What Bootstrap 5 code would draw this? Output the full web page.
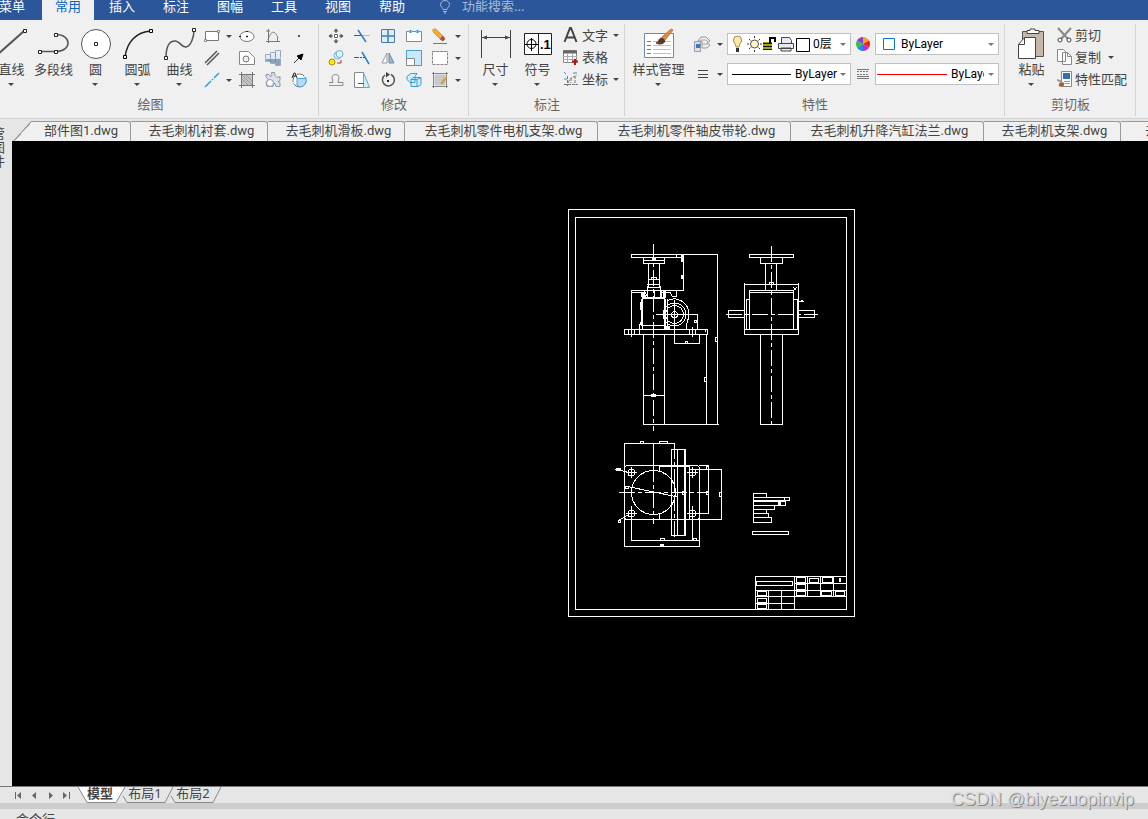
<!DOCTYPE html>
<html lang="zh-CN">
<head>
<meta charset="utf-8">
<meta name="viewport" content="width=device-width, initial-scale=1">
<title>CAD</title>
<link href="https://cdn.jsdelivr.net/npm/bootstrap@5.3.0/dist/css/bootstrap.min.css" rel="stylesheet">
<style>
:root{--chrome:#f0f0f0;--strip:#e6e6e6;--ink:#444;--line:#d4d4d4}
body{font:13px/18px "Noto Sans","Noto Sans CJK SC",sans-serif;color:var(--ink);background:var(--strip)}
svg{display:block;flex:none;fill:none;stroke:#555;stroke-width:1}
button{border:0;background:none;padding:0;color:inherit;font:inherit}
.menu-bar{background:#2b579a;height:20px}
.menu-tabs{margin-left:-12px}
.menu-tab{width:52px;margin:0 1px;height:20px;line-height:12px;color:#fff;text-align:center;text-decoration:none;white-space:nowrap}
.menu-tab:first-child{margin-left:-2px;margin-right:3px}
.menu-tab.active{background:var(--chrome);color:#0a64c8}
.search-box{border:0;background:none;color:#aab9d5;padding:0;width:120px;height:12px;line-height:12px;margin-left:11px;outline:0}
.search-box::placeholder{color:#aab9d5;opacity:1}
.bulb{margin-left:20px;stroke:#aab9d5}
.ribbon{background:var(--chrome);border-bottom:1px solid var(--line);height:99px;overflow:hidden;padding-top:4px}
.panel{border-right:1px solid var(--line);height:92px;white-space:nowrap}
.panel-draw{width:319px}
.panel-modify{width:150px}
.panel-note{width:156px}
.panel-props{width:380px}
.panel-clip{width:131px}
.panel-title{color:#666;text-align:center;line-height:16px;padding-left:1px}
.panel-draw .panel-title{padding-right:18px}
.panel-body{height:72px;padding-left:5px}
.panel-draw .panel-body{margin-left:-10px;padding-left:0}
.big{width:42px;display:flex;flex-direction:column;align-items:center}
.big span{line-height:16px;white-space:nowrap;margin-top:-1px;padding-left:1px}
.big-wide{width:56px}
.caret{width:0;height:0;border:3px solid transparent;border-top-color:#444;border-bottom:0;flex:none;margin:auto}
.big .caret{margin:6px auto 0}
.icons{display:grid;grid-auto-rows:22px;height:67px;padding-top:1px}
.icons>*{display:grid;place-items:center}
.draw-icons{grid-template-columns:24px 10px 26px 26px 26px}
.modify-icons{grid-template-columns:repeat(5,26px) 10px}
.text-rows{display:grid;grid-auto-rows:22px;margin-left:5px}
.text-rows .cmd{display:flex;align-items:center;gap:4px;line-height:18px}
.text-rows .caret{margin:0 0 0 1px}
.panel-clip .cmd{gap:3px}
.prop-row{height:22px;display:flex;align-items:center}
.prop-rows{display:flex;flex-direction:column;gap:8px;padding:9px 0 0 4px}
.drop{width:12px;margin-right:1px;display:grid}
.combo{display:flex;align-items:center;width:124px;height:22px;background:#fff;border:1px solid #c0c0c0;padding:0 4px;color:#000;overflow:hidden}
.combo select{appearance:none;border:0;background:none;padding:0;color:#000;font:12px/18px Roboto,"Noto Sans CJK SC",sans-serif;flex:1 1 0;min-width:0;outline:0}
.combo .caret{border-top-color:#777;margin:0}
.tool{width:24px;display:grid;place-items:center}
.docs{height:22px;padding-left:1px;overflow:hidden;padding-top:2px}
.doc-tab{flex:none;width:137px;height:20px;background:var(--chrome);border:1px solid #999;border-width:1px 1px 0 0;font-family:Roboto,"Noto Sans CJK SC",sans-serif;line-height:17px;text-align:center;padding-left:5px;white-space:nowrap;border-radius:0 3px 0 0}
.doc-wide{width:193px}
.doc-first{width:118px;clip-path:polygon(18px 0,100% 0,100% 100%,0 100%);padding-left:19px;background:linear-gradient(132deg,#999 14px,var(--chrome) 14px)}
.side-strip{width:12px;overflow:hidden;padding-top:7px}
.side-strip span{display:block;line-height:14px;margin-left:-8px;white-space:nowrap}
.work,.work-main{min-height:0;min-width:0}
.drawing{background:#000;overflow:hidden;padding:68px 0 0 556px}
.sheet{stroke:#fff;shape-rendering:crispEdges}
.sheet .solid{fill:#fff}
.layouts{height:17px;padding-left:12px;border-top:1px solid #777;background:var(--strip)}
.nav-arrows{fill:#666;stroke:none}
.lay-tab{height:16px;line-height:12px;text-decoration:none;color:var(--ink);display:grid;justify-items:center}
.lay-tab svg,.lay-tab span{grid-area:1/1}
.lay-tab span{padding-right:4px}
.lay-tab+.lay-tab{margin-left:-6px}
.splitter{height:6px;background:#ccc}
.command{height:10px;padding-left:16px;line-height:20px;overflow:hidden}
.watermark{position:absolute;right:14px;bottom:9px;font:18px/22px "Liberation Sans",sans-serif;color:#d8d8d8;text-shadow:1px 1px 0 #888}
</style>
</head>
<body class="vh-100 d-flex flex-column overflow-hidden position-relative">

<header class="menu-bar d-flex overflow-hidden flex-shrink-0">
  <nav class="menu-tabs d-flex">
    <a class="menu-tab" href="#">菜单</a><a class="menu-tab active" href="#">常用</a><a class="menu-tab" href="#">插入</a><a class="menu-tab" href="#">标注</a><a class="menu-tab" href="#">图幅</a><a class="menu-tab" href="#">工具</a><a class="menu-tab" href="#">视图</a><a class="menu-tab" href="#">帮助</a>
  </nav>
  <svg class="bulb" width="12" height="14"><path d="M4 9.500C4 7.500 1.500 7 1.500 4.500a4.500 4 0 0 1 9 0C10.500 7 8 7.500 8 9.500zM4 11.500h4M5 13h2"/></svg>
  <input class="search-box" type="text" placeholder="功能搜索..." aria-label="功能搜索">
</header>

<div class="ribbon d-flex flex-shrink-0">
  <section class="panel panel-draw">
    <div class="panel-body d-flex">
      <button class="big"><svg width="42" height="38"><path d="M6 32 34 7" stroke-width="2"/><path d="M33.500 5.500h3v3h-3z" fill="#fff" stroke="#222"/></svg><span>直线</span><i class="caret"></i></button>
      <button class="big"><svg width="42" height="38"><path d="M8 27.500h16c16 0 16-17 0-17" stroke-width="1.500"/><path d="M6.500 26.500h3v3h-3zM22.500 26.500h3v3h-3zM22.500 9.500h3v3h-3z" fill="#fff" stroke="#222"/></svg><span>多段线</span></button>
      <button class="big"><svg width="42" height="38"><circle cx="22" cy="20" r="14.500" fill="#fff"/><path d="M20.500 18.500h3v3h-3z" fill="#fff" stroke="#222"/></svg><span>圆</span><i class="caret"></i></button>
      <button class="big"><svg width="42" height="38"><path d="M9 33C11 18 20 8 35 7" stroke="#222" stroke-width="1.500"/><path d="M7.500 31.500h3v3h-3zM33.500 5.500h3v3h-3z" fill="#fff" stroke="#000"/></svg><span>圆弧</span><i class="caret"></i></button>
      <button class="big"><svg width="42" height="38"><path d="M8 34C8 22 12 17 17 17c5 0 7 7 11 6 5-1 8-10 8-17" stroke-width="1.500"/><path d="M6.500 32.500h3v3h-3zM34.500 4.500h3v3h-3z" fill="#fff" stroke="#222"/></svg><span>曲线</span><i class="caret"></i></button>
      <div class="icons draw-icons">
        <button aria-label="矩形"><svg width="16" height="16"><path d="M1.500 3.500h13v9h-13z" fill="#fff" stroke="#777"/><path d="M.5 11.500h2v2h-2zM13.500 2.500h2v2h-2z" fill="#fff" stroke="#888"/></svg></button><i class="caret"></i>
        <button aria-label="椭圆"><svg width="16" height="16"><ellipse cx="8" cy="8.500" rx="7" ry="5" fill="#fff" stroke="#777"/><path d="M7 8.500h2M8 7.500v2M0 8.500h2M7 3.500h2" stroke="#222"/></svg></button>
        <button aria-label="公式曲线"><svg width="16" height="16"><path d="M3.500 1v14M1 13.500h14M3 12C6 2 10 2 13 10M1 3h4M12.500 10v4" stroke="#777"/></svg></button>
        <button aria-label="点"><svg width="16" height="16"><path d="M7 8h2" stroke-width="2"/></svg></button>
        <button aria-label="平行线"><svg width="16" height="16"><path d="M1 13 13 1M3 15 15 3" stroke-width="1.500"/></svg></button><span></span>
        <button aria-label="轮廓"><svg width="16" height="16"><path d="M.5 14.500v-13h9l6 6v7z" fill="#fff" stroke="#888"/><circle cx="7" cy="9" r="3" fill="#eee" stroke="#777"/></svg></button>
        <button aria-label="轴"><svg width="16" height="16"><path d="M.5 4.500h5v-2h5v-2h5v15h-5v-2h-5v-2h-5z" fill="#e8eef5" stroke="#9aa8ba"/><path d="M1 9h14v6h-4v-2H6v-2H1z" fill="#8aa2bb" stroke="none"/><path d="M5.500 5v7M10.500 3v10" stroke="#7b8ba0"/><path d="M0 8h16" stroke="#b9e2f8"/></svg></button>
        <button aria-label="箭头"><svg width="16" height="16"><path d="M3 13 9 7" stroke="#333"/><path d="m12 4-2 6-4-4z" fill="#000" stroke="#000"/></svg></button>
        <button aria-label="中心线"><svg width="16" height="16"><path d="m1 15 6-6m1-1 1-1m1-1 5-5" stroke="#2a9fd8" stroke-width="1.500"/></svg></button><i class="caret"></i>
        <button aria-label="填充"><svg width="16" height="16"><path d="M2.500 2.500h11v11h-11z" fill="#c4c4c4"/><path d="M0 2.500h16M0 13.500h16M2.500 0v16M13.500 0v16" stroke="#777"/><path d="m3 3 10 10M7 3l6 6M3 7l6 6" stroke="#999"/></svg></button>
        <button aria-label="齿轮"><svg width="16" height="16"><path d="M1 2.500h3l1 2 2-1-.5-3h3l.5 3 2 2 3-1v4l-2 1 2 1v4h-4l-1-3H9l-1 3H2l-1-4 2-3-2-3z" fill="#dce1ea" stroke="#8d98a9"/><circle cx="5" cy="11" r="3.500" fill="#fff" stroke="#8d98a9"/></svg></button>
        <button aria-label="局部放大"><svg width="16" height="16"><circle cx="8.500" cy="8.500" r="6.500" fill="#fff" stroke="#777" stroke-dasharray="8 1"/><path d="M6 6.500h9c1 4-2 8-6 8.500l-3-2z" fill="#aeddf5" stroke="#4aa3df"/><path d="M1 6 3 1h1l2 5M2 4h3" stroke="#222"/></svg></button>
      </div>
    </div>
    <div class="panel-title">绘图</div>
  </section>

  <section class="panel panel-modify">
    <div class="panel-body d-flex ps-1">
      <div class="icons modify-icons">
        <button aria-label="平移"><svg width="16" height="16"><path d="M6.500 6.500h3v3h-3z" fill="#fff" stroke="#666"/><path d="M8 1v4M8 11v4M1 8h4M11 8h4" stroke="#555"/><path d="M5.500 3.500 8 .5l2.500 3zM5.500 12.500l2.500 3 2.500-3zM3.500 5.500.5 8l3 2.500zM12.500 5.500l3 2.500-3 2.500z" fill="#555" stroke="none"/></svg></button>
        <button aria-label="裁剪"><svg width="16" height="16"><path d="M4 2 12 14" stroke="#2b7fc4" stroke-width="1.500"/><path d="M0 7.500h7"/><path d="M9 7.500h7" stroke="#8cc8ee"/></svg></button>
        <button aria-label="阵列"><svg width="16" height="16"><path d="M1.500 1.500h13v13h-13z" fill="#d6effb" stroke="#4a7ba8"/><path d="M8 1v14M1 8h14" stroke="#4a7ba8" stroke-width="1.500"/></svg></button>
        <button aria-label="拉伸"><svg width="16" height="16"><path d="M3 3.500H.5v10h15v-10H13M6 3.500h4" fill="#fff" stroke="#888"/><path d="M4.500 2v3M11.500 2v3" stroke="#2b8fd4" stroke-width="2"/></svg></button>
        <button aria-label="删除"><svg width="16" height="16"><path d="m1 1 3 0 7 7-3 3-7-7z" fill="#f3a833" stroke="#e8a03c"/><path d="m8 11 3-3 2 3-2 2z" fill="#b34a32" stroke="#a65"/><path d="M1 15.500h14" stroke="#777"/></svg></button><i class="caret"></i>
        <button aria-label="复制对象"><svg width="16" height="16"><circle cx="4" cy="12" r="3" fill="#ffe800" stroke="#a89000"/><circle cx="9.500" cy="5.500" r="3.500" fill="#e5f5fc" stroke="#6aaed8"/><circle cx="11.500" cy="4" r="3.500" fill="#e5f5fc" stroke="#6aaed8"/><path d="M9 13h4v-3" stroke="#a33"/></svg></button>
        <button aria-label="延伸"><svg width="16" height="16"><path d="M8 2 15 14" stroke="#2b7fc4" stroke-width="1.500"/><path d="M0 7.500h5"/><path d="M6 7.500h5" stroke-dasharray="2 1"/></svg></button>
        <button aria-label="镜像"><svg width="16" height="16"><path d="M7 3v10H2z" fill="#fff" stroke="#999"/><path d="M9 3v10h5z" fill="#8bbcdf" stroke="#789"/></svg></button>
        <button aria-label="缩放"><svg width="16" height="16"><path d="M.5.5h15v15H.5z" fill="#c7e9f9" stroke="#4a9dcc"/><path d="M.5 8.500h8v7h-8z" fill="#fff" stroke="#888"/></svg></button>
        <button aria-label="打断"><svg width="16" height="16"><path d="M.5 1.500h15v13H.5z" fill="#fff" stroke="#888" stroke-dasharray="3 1"/><path d="M0 1.500h16" stroke="#3a9fe0" stroke-dasharray="3 1"/></svg></button><i class="caret"></i>
        <button aria-label="等距线"><svg width="16" height="16"><path d="M1 10.500h4c0-2-1-3-1-5 0-4 7-4 7 0 0 2-1 3-1 5h5" stroke="#888"/><path d="M1 13.500h14v-3" stroke="#5aa5cc"/></svg></button>
        <button aria-label="拔模"><svg width="16" height="16"><path d="M.5.5h9v15h-9z" fill="#fff" stroke="#888"/><path d="m9.500.5 6 15h-6z" fill="#cdeefa" stroke="#6ab"/><path d="M4 11.500h6"/></svg></button>
        <button aria-label="旋转"><svg width="16" height="16"><path d="M5 3a6 6 0 1 0 6-.5" stroke="#555" stroke-width="1.500"/><path d="m6 0 4 2.500-4 3z" fill="#444" stroke="none"/><path d="M7 9h2" stroke="#222" stroke-width="2"/></svg></button>
        <button aria-label="块"><svg width="16" height="16"><path d="M1 4.500 5 1.500h6l-2 3v6H4l-3-3zM5 7.500l2-2h8v7l-3 2H5z" fill="#d3effc" stroke="#3a9bd0"/><path d="M5 7.500h6v7M11 7.500l4-2" stroke="#3a9bd0"/></svg></button>
        <button aria-label="编辑填充"><svg width="16" height="16"><path d="M2.500 2.500h11v11h-11z" fill="#c8c8c8" stroke="none"/><path d="M0 1.500h16M0 14.500h16M1.500 0v16M14.500 0v16" stroke="#888"/><path d="m9 11 5-6 1 1-5 6z" fill="#e9a43c" stroke="#c93"/></svg></button><i class="caret"></i>
      </div>
    </div>
    <div class="panel-title">修改</div>
  </section>

  <section class="panel panel-note">
    <div class="panel-body d-flex">
      <button class="big"><svg width="42" height="38"><path d="M7.500 6v28M36.500 6v28" stroke="#444"/><path d="M8 13.500h28" stroke="#444"/><path d="m8 13.500 5-2v4zM36 13.500l-5-2v4z" fill="#444" stroke="none"/></svg><span>尺寸</span><i class="caret"></i></button>
      <button class="big"><svg width="42" height="38"><path d="M8.500 9.500h27v21h-27zM22.500 9v22" fill="#fff" stroke="#222"/><circle cx="15.500" cy="20" r="4.500" stroke="#000"/><path d="M9 20.500h13M15.500 14v13" stroke="#000"/><text x="24" y="25" font-family="Liberation Sans" font-weight="700" font-size="13" fill="#000" stroke="none">.1</text></svg><span>符号</span><i class="caret"></i></button>
      <div class="text-rows">
        <button class="cmd"><svg width="15" height="16"><path d="M1.500 15 7 1h1l5.500 14M3.500 10.500h8" stroke="#444" stroke-width="2"/></svg><span>文字</span><i class="caret"></i></button>
        <button class="cmd"><svg width="15" height="16"><path d="M.5 1.500h13v12H.5z" fill="#fff" stroke="#888"/><path d="M0 3h14" stroke="#666" stroke-width="3"/><path d="M0 7.500h14M0 10.500h14M4.500 4v9M9.500 4v9" stroke="#aaa"/><path d="M9 12.500h6M12 10v6" stroke="#b11" stroke-width="2"/></svg><span>表格</span></button>
        <button class="cmd"><svg width="15" height="16"><path d="M4.500 5v10M1 13.500h14M5 12c3-7 5-5 9-8M8 7v5M12 5v9" stroke="#777" stroke-dasharray="3 1"/><path d="M1 1l2 2M10 2h4M1 8h3" stroke="#3a8fc4"/></svg><span>坐标</span><i class="caret"></i></button>
      </div>
    </div>
    <div class="panel-title">标注</div>
  </section>

  <section class="panel panel-props">
    <div class="panel-body d-flex">
      <button class="big big-wide"><svg width="42" height="38"><path d="M7.500 9.500h29v24h-29z" fill="#fff" stroke="#7288a4"/><path d="M10 17.500h4M10 21.500h4M10 25.500h4M10 29.500h4" stroke="#5c7fae"/><path d="M16 17.500h18M16 21.500h18M16 25.500h18M16 29.500h18" stroke="#b9c2d6"/><path d="m25 13 9-8 2 1-8 10z" fill="#e08b3a" stroke="#b75"/><path d="M19 19c3 0 2-5 6-5l3 3c-1 3-5 4-9 2z" fill="#5a3a22" stroke="#5a3a22"/></svg><span>样式管理</span><i class="caret"></i></button>
      <div class="prop-rows">
        <div class="prop-row">
          <button class="tool" aria-label="图层"><svg width="16" height="16"><path d="m4 5 3-4h5l4 4-3 2 3 2-3 3H8V5z" fill="#eee" stroke="#999"/><path d="M7 4h5l2 2M8 8h6" stroke="#aaa"/><path d="M.5 5.500h6v10h-6z" fill="#dde" stroke="#99a"/><path d="M2 8h4v4H2z" fill="#357abd" stroke="none"/></svg></button>
          <span class="drop"><i class="caret"></i></span>
          <div class="combo">
            <svg width="79" height="18"><path d="M4 12c0-3-2.500-4-2.500-7a4 4 0 0 1 8 0c0 3-2.500 4-2.500 7z" fill="#ffe9a0" stroke="#998855"/><path d="M4 14h3M4 16h3" stroke="#333" stroke-width="2"/><circle cx="22.500" cy="9" r="4" fill="#fff2cc" stroke="#555"/><path d="M22.500 1v2M22.500 15v2M15 9h2M28 9h2M17 4l1.500 1.500M26.500 12.500 28 14M28 4l-1.500 1.500M18.500 12.500 17 14" stroke="#333"/><path d="M31 7h9v8h-9z" fill="#a4a40a" stroke="none"/><path d="M31 8.500h9M31 11.500h9M31 14.500h9" stroke="#111"/><path d="M38 8V3h5v4" stroke="#000" stroke-width="2"/><path d="M46.500 8.500h15v5h-15zM49.500 8V2.500h8l2 3V8M49 13h10v3H49z" fill="#e8ecf0" stroke="#444"/><path d="M64.500 3.500h13v13h-13z" fill="#fff" stroke="#000"/></svg>
            <select aria-label="当前图层" style="margin-left:2px"><option>0层</option></select><i class="caret"></i>
          </div>
          <button class="tool" aria-label="颜色"><svg width="14" height="14"><g stroke="none"><path d="M7 7V0a7 7 0 0 1 6 3.500z" fill="#f9a11b"/><path d="M7 7l6-3.500a7 7 0 0 1 0 7z" fill="#e8251c"/><path d="m7 7 6 3.500A7 7 0 0 1 7 14z" fill="#c32bd0"/><path d="M7 7v7a7 7 0 0 1-6-3.500z" fill="#1f8bea"/><path d="m7 7-6 3.500a7 7 0 0 1 0-7z" fill="#35c43b"/><path d="M7 7 1 3.500A7 7 0 0 1 7 0z" fill="#8a3be0"/></g></svg></button>
          <div class="combo"><svg width="21" height="16"><path d="M3.500 2.500h11v11h-11z" fill="#fff" stroke="#0a74d0"/></svg><select aria-label="对象颜色"><option>ByLayer</option></select><i class="caret"></i></div>
        </div>
        <div class="prop-row">
          <button class="tool" aria-label="线宽"><svg width="16" height="16"><path d="M4 4.500h10M4 8.500h10M4 11.500h10" stroke="#444"/></svg></button>
          <span class="drop"><i class="caret"></i></span>
          <div class="combo"><svg width="63" height="16"><path d="M0 8.500h59" stroke="#000"/></svg><select aria-label="线型"><option>ByLayer</option></select><i class="caret"></i></div>
          <button class="tool" aria-label="线型管理"><svg width="14" height="14"><path d="M1 2.500h12M1 11.500h12M1 9.500h12" stroke="#777"/><path d="M1 4.500h12M1 7.500h12" stroke="#777" stroke-dasharray="2 1"/></svg></button>
          <div class="combo" style="padding-left:1px"><svg width="74" height="16"><path d="M0 8.500h70" stroke="#f00"/></svg><select aria-label="线宽设置"><option>ByLayer</option></select><i class="caret ms-1"></i></div>
        </div>
      </div>
    </div>
    <div class="panel-title">特性</div>
  </section>

  <section class="panel panel-clip">
    <div class="panel-body d-flex">
      <button class="big"><svg width="42" height="38"><path d="M12.500 7.500h21v25h-21z" fill="#c4b8aa" stroke="#555"/><path d="M17 9.500V6.500h3V5h5v1.500h4v3z" fill="#fff" stroke="#444"/><path d="M8.500 20.500l6-7h11v21h-17z" fill="#fff" stroke="#444"/><path d="M8.500 20.500h6v-7" stroke="#444"/></svg><span>粘贴</span><i class="caret"></i></button>
      <div class="text-rows">
        <button class="cmd"><svg width="15" height="16"><path d="m1 1 10 11M14 1 4 12" stroke="#888" stroke-width="2"/><circle cx="3" cy="13" r="2" fill="#fff" stroke="#444"/><circle cx="12" cy="13" r="2" fill="#fff" stroke="#444"/></svg><span>剪切</span></button>
        <button class="cmd"><svg width="15" height="16"><path d="M.5.5h6l2 2v10h-8zM5.500 3.500h5l4 4v8h-9z" fill="#fff" stroke="#888"/><path d="M10.500 3.500v4h4" stroke="#888"/></svg><span>复制</span><i class="caret ms-1"></i></button>
        <button class="cmd"><svg width="15" height="16"><path d="M4.500.5h10v15h-10z" fill="#fff" stroke="#888"/><path d="M6 2h7v6H6z" fill="#2d6eb5" stroke="none"/><path d="M7 10.500h6M8 12.500h5" stroke="#999"/><path d="m0 9 5 2" stroke="#999" stroke-width="2"/><path d="M3 12h4l-1 3H2z" fill="#a5632b" stroke="#a5632b"/></svg><span>特性匹配</span></button>
      </div>
    </div>
    <div class="panel-title">剪切板</div>
  </section>
</div>

<div class="work d-flex flex-grow-1">
  <aside class="side-strip flex-shrink-0"><span>管</span><span>图</span><span>件</span></aside>
  <main class="work-main d-flex flex-column flex-grow-1">
    <nav class="docs d-flex flex-shrink-0">
      <div class="doc-tab doc-first">部件图1.dwg</div><div class="doc-tab">去毛刺机衬套.dwg</div><div class="doc-tab">去毛刺机滑板.dwg</div><div class="doc-tab doc-wide">去毛刺机零件电机支架.dwg</div><div class="doc-tab doc-wide">去毛刺机零件轴皮带轮.dwg</div><div class="doc-tab doc-wide">去毛刺机升降汽缸法兰.dwg</div><div class="doc-tab">去毛刺机支架.dwg</div><div class="doc-tab">去毛刺机轴.dwg</div>
    </nav>
    <div class="drawing flex-grow-1">
    <svg class="sheet" width="287" height="408" viewBox="568 209 287 408">
      <path d="M568.500 209.500h286v407h-286zM575.500 217.500h271v392h-271z"/>
      <!-- front view -->
      <path d="M653.500 244v187M771.500 246v182" stroke-dasharray="16 3 4 3"/>
      <path d="M718 254.500h-86.500v3h52M676.500 254v3M643.500 257v6h21v-6M643 260.500h21M648.500 263v24M659.500 263v24M649 279.500h10M647 284.500h13M647 287.500h13M647.500 286v12M660.500 286v12M651.500 279v-2h5v2M683.500 254v36.500h-52M631.500 290v47M632 292.500h12M642 298.500h23M642.500 299v30M665.500 299v30M642 325.500h23M654.500 290v8"/>
      <path d="M644 291l3 4-4 3M643 297l-2 5v8l1 4-1 8-2 5 1 7M661 292h9l2 4h4.500v-5.500H661v6M640.500 302v8M641.500 300v26M664.500 299v30M667 299v30" />
      <path d="M663 291h3v7h-3zM641 292h4v5h-4zM681 255h3v7h-3zM681 275h3v4h-3zM651 394h5v3h-5zM665 326h5v3h-5zM652 257h4v3h-4zM643 297h22v2h-22z" class="solid" stroke="none"/>
      <circle cx="674.500" cy="314.500" r="11.500"/><circle cx="674.500" cy="314.500" r="9"/><circle cx="674.500" cy="314.500" r="3"/>
      <path d="M667 301c10-6 22 2 22 13 0 8-4 8-2 15M656 314.500h41.500v15M674.500 300v44M674 343.500h25.500v-9M685.500 343v-2h2v2"/>
      <path d="M624.500 329.500h83v5h-83zM628.500 329v5M634.500 329v5M689.500 329v5M692.500 327v10M695.500 329v5M705.500 329v3M643.500 334v90M664.500 334v90M643 395.500h21M706.500 334v90M717.500 254v170M643 424.500h76"/>
      <path d="M704.500 377.500h2v4h-2zM715.500 337.500h2v4h-2zM694.500 320.500h2v2h-2z"/>
      <!-- side view -->
      <path d="M749.500 254.500h44v3h-44zM760.500 257v6.500h22V257M765.500 263v28M776.500 263v28M744.500 283v51h54v-51M744 284.500h54M749.500 329v-38.500h44v38.500M749 292.500h44M745.500 299.500h4M793 299.500h5M746 299v30M797 299v30M744 329.500h54M744 334.500h55M744 310.500h-15.500v7H744M798 310.500h16.500v7H798M760.500 334v90.500h22V334M769.500 284v-2h4v2"/>
      <path d="M726 314.500h92" stroke-dasharray="16 3 4 3"/><path d="M793 287l3 3M797 287l-3 3M799 301.500h5M801 300.500h2"/>
      <!-- plan view -->
      <rect x="624.500" y="465.500" width="75" height="54" rx="3"/><circle cx="653.500" cy="492.500" r="22"/>
      <path d="M674.500 443.500h-50V546.500h75v-27M653.500 443v23M671.500 449.500h14v86h-14zM677.500 449v86M684.500 449v86M659.500 466v5M659.500 514v5M659.500 466.500h30v53M699 465.500h9.500v48h-16M692 469.500h30M721.500 469v50.500H699M631.500 506v34.500h68M692.500 506v35M625 486l53 11M615 469l16 4M618 521l13-8M640.500 443v-2h3v2M659.500 443v-2h8v2M660.500 540v-2h4v2M693.500 540v-2h3v2"/>
      <path d="M653.500 466v58M674.500 443v97M619 492.500h90" stroke-dasharray="16 3 4 3"/>
      <path d="M616 468h5v3h-5zM660 544h4v3h-4z" class="solid" stroke="none"/>
      <path d="M618.500 520.500h2v2h-2zM625.500 486.500h3v2h-3zM682.500 491.500h2v3h-2zM706.500 491.500h2v3h-2zM706.500 466.500h2v3h-2zM719.500 492.500h2v4h-2z"/>
      <g><circle cx="631.500" cy="472.500" r="3.500"/><circle cx="692.500" cy="472.500" r="3.500"/><circle cx="631.500" cy="513.500" r="3.500"/><circle cx="692.500" cy="513.500" r="3.500"/><path d="M626 472.500h11M631.500 467v11M687 472.500h11M692.500 467v11M626 513.500h11M631.500 508v11M687 513.500h11M692.500 508v11"/></g>
      <!-- technical notes -->
      <path d="M753.500 493.500h13v4h-13zM753.500 497.500h36v3h-36zM784.500 497v3M753.500 501.500h32v4h-32zM753.500 505.500h21v4h-21zM753.500 509.500h13v4h-13zM753.500 513.500h15v4h-15zM753.500 517.500h18v5h-18zM752.500 531.500h36v3h-36z"/><path d="M778 502h3v3h-3z" class="solid" stroke="none"/>
      <!-- title block -->
      <path d="M846 576.500h-90.500v33M756 590.500h90M794.500 576v33M756.500 581.500h36v4h-36zM807.500 576v20M820.500 576v20M833.500 576v20M794 583.500h52M794 596.500h52M768.500 590v19M781.500 590v19M756 596.500h39M756 603.500h39"/>
      <path d="M796.500 577.500h9v5h-9zM796.500 584.500h9v5h-9zM796.500 591.500h9v4h-9zM809.500 578.500h9v4h-9zM822.500 577.500h10v5h-10zM821.500 591.500h10v4h-10zM835.500 591.500h9v4h-9zM757.500 591.500h9v4h-9zM757.500 598.500h9v4h-9zM757.500 604.500h9v4h-9zM839.500 578v4M840.500 578v4"/>
    </svg>
    </div>
  </main>
</div>

<div class="layouts d-flex flex-shrink-0">
  <svg class="nav-arrows" width="66" height="16"><path d="M3 5h1v7H3zM9 5v7L5 8.500zM24 5v7l-4-3.500zM37 5v7l4-3.500zM51 5v7l4-3.500zM57 5h1v7h-1z"/></svg>
  <a class="lay-tab fw-bold" href="#"><svg width="48" height="16"><path d="M0 0l9 15.500h29L47 0" fill="#fff" stroke="#888"/></svg><span>模型</span></a>
  <a class="lay-tab" href="#"><svg width="54" height="16"><path d="M3 9l4 6.500h38L53 0" stroke="#888"/></svg><span>布局1</span></a>
  <a class="lay-tab" href="#"><svg width="54" height="16"><path d="M3 9l4 6.500h38L53 0" stroke="#888"/></svg><span>布局2</span></a>
</div>
<div class="splitter flex-shrink-0"></div>
<div class="command flex-shrink-0">命令行</div>
<div class="watermark">CSDN @biyezuopinvip</div>

<script src="https://cdn.jsdelivr.net/npm/bootstrap@5.3.0/dist/js/bootstrap.bundle.min.js"></script>
</body>
</html>
